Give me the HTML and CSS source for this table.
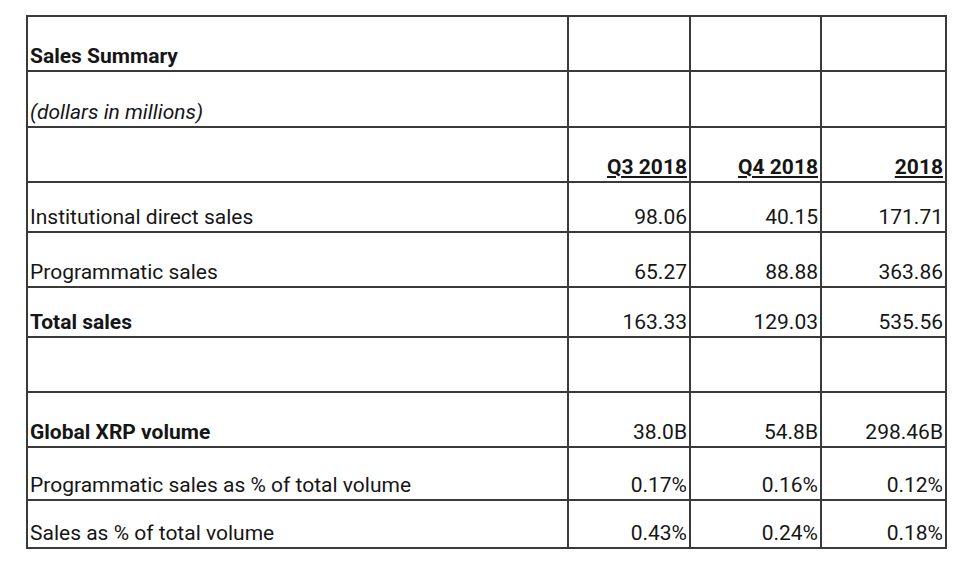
FILE: index.html
```html
<!DOCTYPE html>
<html lang="en">
<head>
<meta charset="utf-8">
<title>Sales Summary</title>
<link rel="stylesheet" href="styles.css">
</head>
<body>
<table class="sales">
  <colgroup>
    <col class="c-label">
    <col class="c-q3">
    <col class="c-q4">
    <col class="c-year">
  </colgroup>
  <tbody>
    <tr class="h55"><td class="bold">Sales Summary</td><td></td><td></td><td></td></tr>
    <tr class="h56"><td class="italic">(dollars in millions)</td><td></td><td></td><td></td></tr>
    <tr class="h55"><td></td><td class="num head">Q3 2018</td><td class="num head">Q4 2018</td><td class="num head">2018</td></tr>
    <tr class="h50"><td>Institutional direct sales</td><td class="num">98.06</td><td class="num">40.15</td><td class="num">171.71</td></tr>
    <tr class="h55"><td>Programmatic sales</td><td class="num">65.27</td><td class="num">88.88</td><td class="num">363.86</td></tr>
    <tr class="h50"><td class="bold">Total sales</td><td class="num">163.33</td><td class="num">129.03</td><td class="num">535.56</td></tr>
    <tr class="h55"><td></td><td></td><td></td><td></td></tr>
    <tr class="h55"><td class="bold">Global XRP volume</td><td class="num">38.0B</td><td class="num">54.8B</td><td class="num">298.46B</td></tr>
    <tr class="h53"><td>Programmatic sales as % of total volume</td><td class="num">0.17%</td><td class="num">0.16%</td><td class="num">0.12%</td></tr>
    <tr class="h48"><td>Sales as % of total volume</td><td class="num">0.43%</td><td class="num">0.24%</td><td class="num">0.18%</td></tr>
  </tbody>
</table>
</body>
</html>
```
FILE: styles.css
```css
html, body {
  margin: 0;
  padding: 0;
  background: #ffffff;
}

body {
  font-family: Roboto, "Liberation Sans", sans-serif;
  color: #161616;
}

.sales {
  margin: 15px 0 0 26px;
  border-collapse: collapse;
  table-layout: fixed;
  width: 919px;
  font-size: 21px;
}

.c-label { width: 541px; }
.c-q3 { width: 122px; }
.c-q4 { width: 131px; }
.c-year { width: 125px; }

.sales td {
  border: 2px solid #3a3a3a;
  padding: 0 2px 2px 2px;
  vertical-align: bottom;
  white-space: nowrap;
  line-height: 24px;
}

.h55 { height: 55px; }
.h56 { height: 56px; }
.h50 { height: 50px; }
.h53 { height: 53px; }
.h48 { height: 48px; }

.bold { font-weight: 700; }
.italic { font-style: italic; }
.num { text-align: right; }
.head {
  font-weight: 700;
  text-decoration: underline;
  text-underline-offset: 2px;
}
```
